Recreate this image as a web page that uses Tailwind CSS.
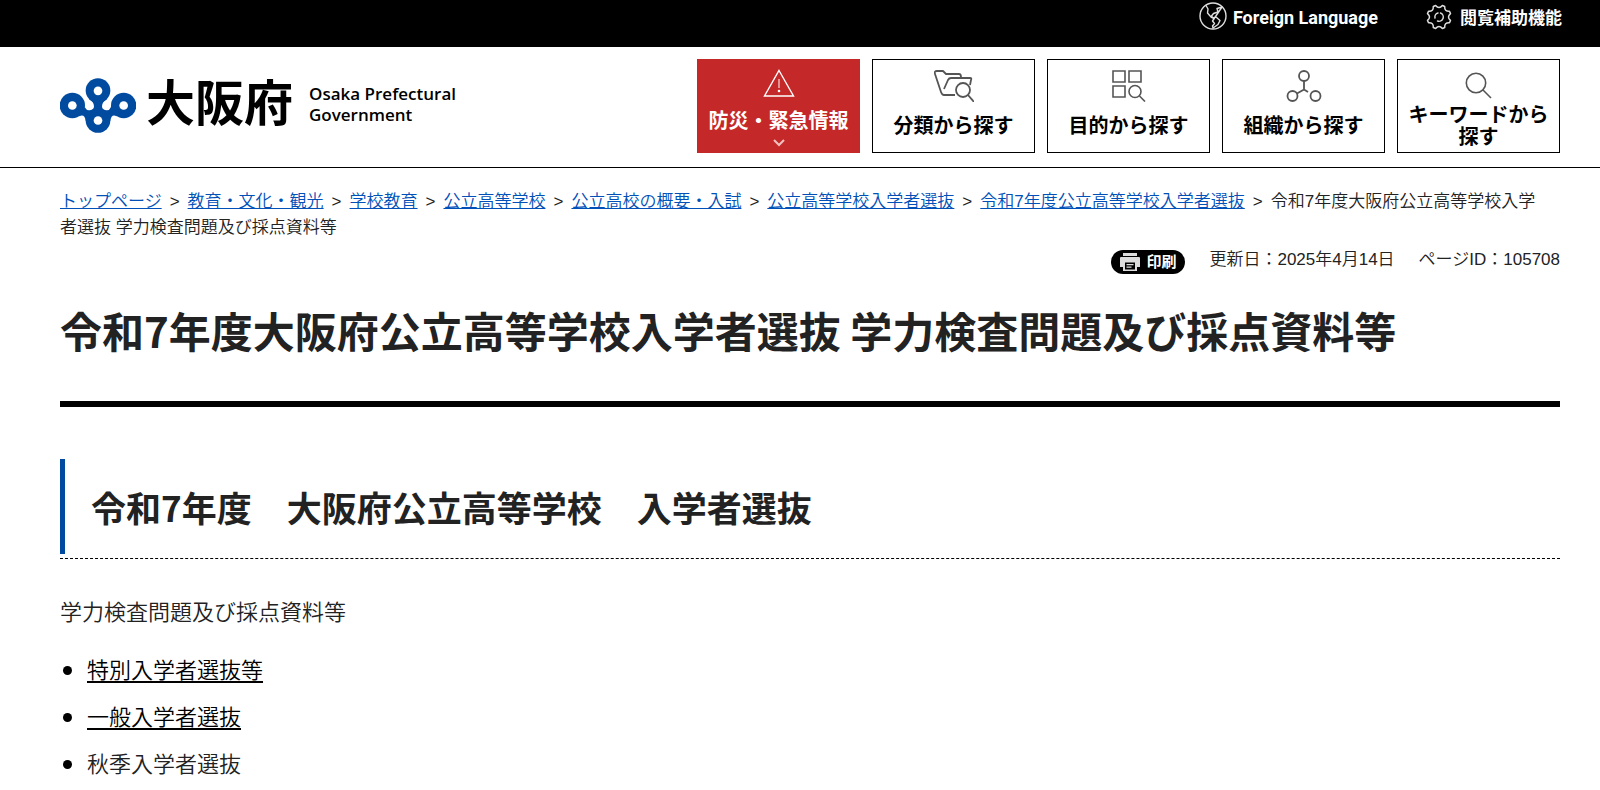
<!DOCTYPE html>
<html lang="ja">
<head>
    <meta charset="UTF-8">
    <meta name="viewport" content="width=device-width, initial-scale=1.0">
    <title>令和7年度大阪府公立高等学校入学者選抜 学力検査問題及び採点資料等</title>
    <script src="https://cdn.jsdelivr.net/npm/@tailwindcss/browser@4"></script>
</head>
<body class="bg-white text-[#222] font-[350] font-['Liberation_Sans','Noto_Sans_CJK_JP',sans-serif]">
    <!-- Utility bar -->
    <div class="bg-black text-white h-[47px] px-[38px] flex justify-end gap-12">
        <a href="#" class="flex items-center gap-1.5 h-[34px] text-[18px] font-bold font-['Roboto',sans-serif]">
            <svg class="w-7 h-7 -mt-0.5" viewBox="0 0 28 28" fill="none" stroke="#ddd" stroke-width="1.4" stroke-linejoin="round" stroke-linecap="round">
                <circle cx="14" cy="14" r="13"/>
                <path d="M7 3.500L9 7L8.500 11L12 15L14 16M23 5L18 6.500L19 10L14.500 11.500L12.500 14L14 16L17 15L21 18.500L19 22.500L14 26L13.500 24L15.500 21.500L13.500 19z"/>
            </svg>
            Foreign Language
        </a>
        <a href="#" class="flex items-center gap-2 h-[34px] text-[17px] font-bold font-['Noto_Sans_CJK_JP',sans-serif]">
            <svg class="w-[26px] h-[26px]" viewBox="-13 -13 26 26" fill="none" stroke="#ddd" stroke-width="1.5" stroke-linejoin="round" stroke-linecap="round">
                <path d="M3.400-11.500L5.700-10.500Q5.300-5.300 10.500-5.700L11.500-3.400Q7.500 0 11.500 3.400L10.500 5.700Q5.300 5.300 5.700 10.500L3.400 11.500Q0 7.500-3.400 11.500L-5.700 10.500Q-5.300 5.300-10.500 5.700L-11.500 3.400Q-7.500 0-11.500-3.400L-10.500-5.700Q-5.300-5.300-5.700-10.500L-3.400-11.500Q0-7.500 3.400-11.500z"/>
                <path d="M-4 1A4.200 4.200 0 0 1-1-4M1.500-4A4.200 4.200 0 1 1-1.500 4"/>
            </svg>
            閲覧補助機能
        </a>
    </div>

    <!-- Header -->
    <header class="border-b border-black pl-[60px] pr-10 py-3 h-[121px] flex justify-between items-start">
        <a href="#" class="flex items-center mt-[19px] text-black">
            <svg class="w-[76px] h-[55px]" viewBox="60 84 228 164" aria-hidden="true">
                <g fill="#004b9f">
                    <circle cx="174" cy="121" r="37"/>
                    <circle cx="97" cy="166" r="38"/>
                    <circle cx="251" cy="166" r="38"/>
                    <circle cx="174" cy="211" r="37"/>
                    <path d="M97 166L118 198Q134 190 137 212L211 212Q214 190 230 198L251 166L214 166L212 172Q208 182 198 180Q186 178 186 168Q187 155 200 148L174 122L148 148Q161 155 162 168Q162 178 150 180Q140 182 135 172Z"/>
                </g>
                <g fill="#fff">
                    <circle cx="174" cy="122" r="13"/>
                    <circle cx="97" cy="166" r="13"/>
                    <circle cx="251" cy="166" r="13"/>
                    <circle cx="174" cy="211" r="13"/>
                </g>
            </svg>
            <span class="ml-2.5 -mt-3 text-[49px] leading-[55px] font-bold font-['Noto_Sans_CJK_JP',sans-serif]">大阪府</span>
            <span class="ml-4 -mt-1 text-[17px] leading-[21px] font-semibold font-['Open_Sans',sans-serif]">Osaka Prefectural<br>Government</span>
        </a>
        <nav class="flex gap-3 text-black text-center text-[20px] leading-[22px] font-bold font-['Noto_Sans_CJK_JP',sans-serif]">
            <button type="button" class="w-[163px] h-[94px] bg-[#c52828] text-white flex flex-col items-center pt-2.5">
                <svg class="w-8 h-7" viewBox="0 0 32 28" fill="none" stroke="#fff" stroke-width="1.4">
                    <path d="M16 1.500L30.500 27H1.500z"/>
                    <path d="M16 10v9" stroke-width="1"/>
                    <circle cx="16" cy="22" r="1.300" fill="#fff" stroke="none"/>
                </svg>
                <span class="mt-3">防災・緊急情報</span>
                <svg class="mt-1.5 w-3 h-3" viewBox="0 0 12 12" fill="none" stroke="#f0c0c0" stroke-width="2"><path d="M1 3l5 5 5-5"/></svg>
            </button>
            <a href="#" class="w-[163px] h-[94px] border border-black flex flex-col items-center pt-2.5">
                <svg class="w-10 h-8" viewBox="0 0 40 32" fill="none" stroke="#555" stroke-width="1.800" stroke-linejoin="round">
                    <path d="M21 25H10Q8 25 7 22L1 4Q0 1 3 1H9L12 4H25Q27 4 27 7V9"/>
                    <path d="M10 19L14 10Q15 8 17 8H36Q38 8 37 10L36 15"/>
                    <circle cx="29" cy="20" r="7"/>
                    <path d="M34 25L40 32"/>
                </svg>
                <span class="mt-3">分類から探す</span>
            </a>
            <a href="#" class="w-[163px] h-[94px] border border-black flex flex-col items-center pt-2.5">
                <svg class="w-[34px] h-8" viewBox="0 0 34 32" fill="none" stroke="#555" stroke-width="1.600">
                    <path d="M1 1h12v11H1zM17 1h12v11H17zM1 16h12v11H1z"/>
                    <circle cx="23" cy="21.500" r="6"/>
                    <path d="M27.500 26L33 31.500"/>
                </svg>
                <span class="mt-3">目的から探す</span>
            </a>
            <a href="#" class="w-[163px] h-[94px] border border-black flex flex-col items-center pt-2.5">
                <svg class="w-9 h-8" viewBox="0 0 36 32" fill="none" stroke="#555" stroke-width="1.800">
                    <circle cx="18" cy="6" r="5"/>
                    <circle cx="6.500" cy="26" r="5"/>
                    <circle cx="29.500" cy="26" r="5"/>
                    <path d="M18 11v8.500L11 23.500M18 19.500L22 22"/>
                </svg>
                <span class="mt-3">組織から探す</span>
            </a>
            <a href="#" class="w-[163px] h-[94px] border border-black flex flex-col items-center pt-3 px-2.5">
                <svg class="w-[27px] h-[27px] shrink-0" viewBox="0 0 27 27" fill="none" stroke="#555" stroke-width="1.600">
                    <circle cx="11" cy="11" r="9.700"/>
                    <path d="M18 18L26 26"/>
                </svg>
                <span class="mt-1">キーワードから<br>探す</span>
            </a>
        </nav>
    </header>

    <main class="pl-[60px] pr-10">
        <nav class="mt-[21px] pr-2 text-[17px] leading-[26px]" aria-label="パンくずリスト">
            <a href="#" class="text-[#0050b8] underline">トップページ</a><span class="mx-2">&gt;</span><a href="#" class="text-[#0050b8] underline">教育・文化・観光</a><span class="mx-2">&gt;</span><a href="#" class="text-[#0050b8] underline">学校教育</a><span class="mx-2">&gt;</span><a href="#" class="text-[#0050b8] underline">公立高等学校</a><span class="mx-2">&gt;</span><a href="#" class="text-[#0050b8] underline">公立高校の概要・入試</a><span class="mx-2">&gt;</span><a href="#" class="text-[#0050b8] underline">公立高等学校入学者選抜</a><span class="mx-2">&gt;</span><a href="#" class="text-[#0050b8] underline">令和7年度公立高等学校入学者選抜</a><span class="mx-2">&gt;</span><span>令和7年度大阪府公立高等学校入学者選抜 学力検査問題及び採点資料等</span>
        </nav>

        <div class="mt-[5px] flex justify-end items-center gap-6 text-[17px] leading-[26px]">
            <button type="button" class="mt-1 w-[74px] h-6 rounded-full bg-black text-white text-[15px] font-bold flex items-center justify-center gap-1.5">
                <svg class="w-5 h-[18px]" viewBox="0 0 20 18" fill="#ddd">
                    <path d="M3 0h14v3H3zM1 4h18q1 0 1 1v9h-3V8H3v6H0V5q0-1 1-1z"/>
                    <path d="M3 8h14v10H3zM5 9.500v7h10v-7zM6.500 11h7v1.300h-7zM6.500 13.500h5v1.300h-5z" fill-rule="evenodd"/>
                </svg>
                印刷
            </button>
            <span>更新日：2025年4月14日</span>
            <span>ページID：105708</span>
        </div>

        <h1 class="mt-6 pb-[39px] border-b-6 border-black text-[42px] leading-[64px] font-bold font-['Noto_Sans_CJK_JP',sans-serif]">令和7年度大阪府公立高等学校入学者選抜 学力検査問題及び採点資料等</h1>

        <div class="mt-[52px] pb-1 border-b border-dashed border-black">
            <h2 class="border-l-5 border-[#004b9f] pl-[26px] py-[22px] text-[35px] leading-[51px] font-bold font-['Noto_Sans_CJK_JP',sans-serif]">令和7年度　大阪府公立高等学校　入学者選抜</h2>
        </div>

        <p class="mt-9 text-[22px] leading-[35px]">学力検査問題及び採点資料等</p>
        <ul class="mt-[23px] text-[22px] leading-[35px] flex flex-col gap-3">
            <li class="flex items-center gap-[15px] pl-[3px]">
                <span class="w-[9px] h-[9px] rounded-full bg-black"></span>
                <a href="#" class="text-black underline decoration-2 underline-offset-3">特別入学者選抜等</a>
            </li>
            <li class="flex items-center gap-[15px] pl-[3px]">
                <span class="w-[9px] h-[9px] rounded-full bg-black"></span>
                <a href="#" class="text-black underline decoration-2 underline-offset-3">一般入学者選抜</a>
            </li>
            <li class="flex items-center gap-[15px] pl-[3px]">
                <span class="w-[9px] h-[9px] rounded-full bg-black"></span>
                <span>秋季入学者選抜</span>
            </li>
        </ul>
    </main>
</body>
</html>
